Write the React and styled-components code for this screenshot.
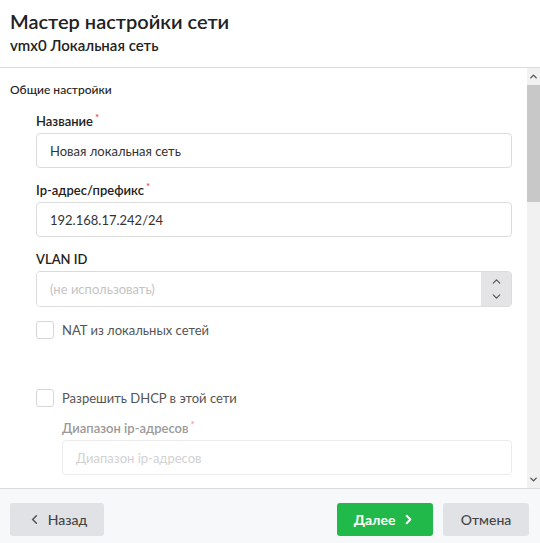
import React from "react";
import styled, { createGlobalStyle } from "styled-components";
import { ChevronLeft, ChevronRight, ChevronUp, ChevronDown } from "lucide-react";

const GlobalStyle = createGlobalStyle`
  html, body {
    margin: 0;
    padding: 0;
    background: #fff;
    overflow: hidden;
  }
  body {
    font-family: Lato, "Noto Sans", sans-serif;
    color: #333;
  }
  * {
    box-sizing: border-box;
  }
`;

const Dialog = styled.div`
  display: flex;
  flex-direction: column;
  width: 540px;
  height: 543px;
  background: #fff;
`;

const Header = styled.div`
  height: 68px;
  padding: 8px 10px 0;
  border-bottom: 1px solid #dcdcdc;
`;

const Title = styled.h1`
  margin: 0;
  font-size: 20px;
  line-height: 26px;
  font-weight: 600;
  color: #222;
`;

const Subtitle = styled.h2`
  margin: 0;
  font-size: 15px;
  line-height: 22px;
  font-weight: 600;
  color: #222;
`;

const Body = styled.div`
  display: flex;
  height: 420px;
  overflow: hidden;
`;

const Content = styled.div`
  flex: 1;
  padding: 14px 15px 0 10px;
  overflow: hidden;
`;

const SectionTitle = styled.div`
  font-size: 12px;
  line-height: 16px;
  font-weight: 500;
  color: #222;
  margin-bottom: 15px;
`;

const Fields = styled.div`
  padding-left: 26px;
`;

const Field = styled.div`
  margin-top: ${(p) => p.$top || 0}px;
  margin-bottom: 14px;
`;

const Label = styled.div`
  height: 16px;
  font-size: 13px;
  line-height: 16px;
  font-weight: 600;
  color: ${(p) => (p.$disabled ? "#9a9a9a" : "#222")};
  margin-bottom: 4px;
`;

const Required = styled.span`
  position: relative;
  top: -5px;
  margin-left: 2px;
  font-size: 10px;
  color: ${(p) => (p.$disabled ? "#ef9aa4" : "#e5485a")};
`;

const Input = styled.input`
  display: block;
  width: 100%;
  height: 35px;
  padding: 0 13px;
  border: 1px solid ${(p) => (p.disabled ? "#ececec" : "#dcdcdc")};
  border-radius: 4px;
  background: #fff;
  font-family: inherit;
  font-size: 13px;
  color: #333;
  outline: none;

  &::placeholder {
    color: ${(p) => (p.disabled ? "#d2d2d2" : "#c4c4c4")};
  }
`;

const NumberBox = styled.div`
  display: flex;
  height: 36px;
  border: 1px solid #dcdcdc;
  border-radius: 4px;
  overflow: hidden;
`;

const NumberInput = styled.input`
  flex: 1;
  border: none;
  padding: 0 13px;
  font-family: inherit;
  font-size: 13px;
  color: #333;
  outline: none;

  &::placeholder {
    color: #c4c4c4;
  }
`;

const Spinner = styled.div`
  width: 30px;
  display: flex;
  flex-direction: column;
  align-items: center;
  justify-content: center;
  gap: 2px;
  background: #e4e4e6;
  color: #555;
`;

const CheckRow = styled.label`
  display: flex;
  align-items: center;
  gap: 8px;
  height: 18px;
  margin-top: ${(p) => p.$top || 0}px;
  font-size: 13px;
  color: #555;
`;

const Box = styled.span`
  width: 18px;
  height: 18px;
  border: 1px solid #d6d6d6;
  border-radius: 3px;
  background: #fff;
`;

const Scrollbar = styled.div`
  width: 13px;
  display: flex;
  flex-direction: column;
  background: #f1f1f1;
`;

const ScrollButton = styled.div`
  height: 17px;
  display: flex;
  align-items: center;
  justify-content: center;
  color: #505050;
`;

const Thumb = styled.div`
  height: 117px;
  background: #c8c8c8;
`;

const Track = styled.div`
  flex: 1;
`;

const Footer = styled.div`
  display: flex;
  align-items: flex-start;
  gap: 10px;
  height: 55px;
  padding: 14px 11px 0 10px;
  background: #f7f8fa;
  border-top: 1px solid #dcdcdc;
`;

const Spacer = styled.div`
  flex: 1;
`;

const Button = styled.button`
  display: flex;
  align-items: center;
  justify-content: center;
  gap: 6px;
  height: 33px;
  width: ${(p) => p.$width}px;
  border: none;
  border-radius: 3px;
  background: ${(p) => (p.$primary ? "#22b94b" : "#e1e2e5")};
  color: ${(p) => (p.$primary ? "#fff" : "#444")};
  font-family: inherit;
  font-size: 14px;
  font-weight: ${(p) => (p.$primary ? 700 : 500)};
  cursor: pointer;
`;

export default function App() {
  return (
    <Dialog>
      <GlobalStyle />
      <Header>
        <Title>Мастер настройки сети</Title>
        <Subtitle>vmx0 Локальная сеть</Subtitle>
      </Header>
      <Body>
        <Content>
          <SectionTitle>Общие настройки</SectionTitle>
          <Fields>
            <Field>
              <Label>
                Название<Required>*</Required>
              </Label>
              <Input defaultValue="Новая локальная сеть" />
            </Field>
            <Field>
              <Label>
                Ip-адрес/префикс<Required>*</Required>
              </Label>
              <Input defaultValue="192.168.17.242/24" />
            </Field>
            <Field>
              <Label>VLAN ID</Label>
              <NumberBox>
                <NumberInput placeholder="(не использовать)" />
                <Spinner>
                  <ChevronUp size={13} strokeWidth={2.2} />
                  <ChevronDown size={13} strokeWidth={2.2} />
                </Spinner>
              </NumberBox>
            </Field>
            <CheckRow>
              <Box />
              NAT из локальных сетей
            </CheckRow>
            <CheckRow $top={50}>
              <Box />
              Разрешить DHCP в этой сети
            </CheckRow>
            <Fields>
              <Field $top={13}>
                <Label $disabled>
                  Диапазон ip-адресов<Required $disabled>*</Required>
                </Label>
                <Input disabled placeholder="Диапазон ip-адресов" />
              </Field>
            </Fields>
          </Fields>
        </Content>
        <Scrollbar>
          <ScrollButton>
            <ChevronUp size={11} strokeWidth={3} />
          </ScrollButton>
          <Thumb />
          <Track />
          <ScrollButton>
            <ChevronDown size={11} strokeWidth={3} />
          </ScrollButton>
        </Scrollbar>
      </Body>
      <Footer>
        <Button $width={94}>
          <ChevronLeft size={15} strokeWidth={2.5} color="#555" />
          Назад
        </Button>
        <Spacer />
        <Button $primary $width={96}>
          Далее
          <ChevronRight size={15} strokeWidth={3} />
        </Button>
        <Button $width={86}>Отмена</Button>
      </Footer>
    </Dialog>
  );
}
